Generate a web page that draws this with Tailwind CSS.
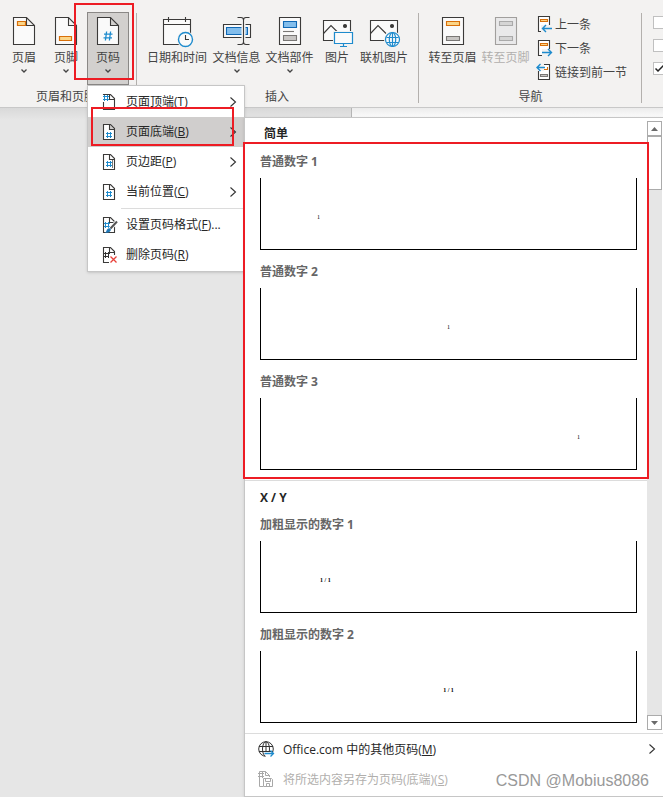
<!DOCTYPE html>
<html lang="zh-CN">
<head>
<meta charset="utf-8">
<title>页眉和页脚</title>
<script src="https://cdn.jsdelivr.net/npm/@tailwindcss/browser@4"></script>
</head>
<body class="relative min-h-screen overflow-x-hidden bg-[#e6e6e6] font-['Open_Sans','Noto_Sans_CJK_SC',sans-serif] text-xs text-[#444]">

<svg class="hidden" aria-hidden="true">
  <symbol id="page" viewBox="0 0 34 32"><path d="M6.500 1.500H19.500L27.500 9.500V28.500H6.500ZM19.500 1.500V9.500H27.500" fill="#fafafa" stroke="#3b3a39" stroke-width="1.100"/></symbol>
  <symbol id="photo" viewBox="0 0 34 32"><g fill="#fafafa" stroke="#3b3a39" stroke-width="1.100"><path d="M3.500 4.500H30.500V24.500H3.500Z"/><path d="M3.500 17.500L11 9.500L19 17.500" fill="none"/><circle cx="25" cy="10" r="1.500" fill="#3b3a39"/></g></symbol>
  <symbol id="small" viewBox="0 0 18 18"><path d="M1.500 1.500H8.500L12.500 5.500V16.500H1.500ZM7.500 1.500V6.500H12.500" fill="#fff" stroke="#3b3a39" stroke-width="1.100"/></symbol>
  <symbol id="hash" viewBox="0 0 10 10"><path d="M3.600 0.500L2.400 9.500M7.600 0.500L6.400 9.500M1 3.200H9.500M0.500 6.800H9" fill="none" stroke="currentColor" stroke-width="1.300"/></symbol>
  <symbol id="tinyhash" viewBox="0 0 6 6"><path d="M1.500 0V6M4.500 0V6M0 1.500H6M0 4.500H6" fill="none" stroke="currentColor"/></symbol>
  <symbol id="down" viewBox="0 0 8 6"><path d="M1.500 1.500L4 4L6.500 1.500" fill="none" stroke="#444" stroke-width="1.300"/></symbol>
  <symbol id="right" viewBox="0 0 8 12"><path d="M1.500 1.500L6.500 6L1.500 10.500" fill="none" stroke="#333" stroke-width="1.100"/></symbol>
</svg>

<header class="flex h-[108px] overflow-hidden whitespace-nowrap border-b border-[#c8c8c8] bg-[#f3f2f1] pt-3">
  <section class="flex shrink-0 flex-col px-[3px]" aria-label="页眉和页脚">
    <div class="flex">
      <button class="flex h-[72px] w-[42px] flex-col items-center pt-1">
        <svg class="h-8 w-[34px] shrink-0" viewBox="0 0 34 32"><use href="#page"/><path d="M10.500 5.500H18.500V9.500H10.500Z" fill="#fbd588" stroke="#d86f0a" stroke-width="1.200"/></svg>
        <span class="h-5 leading-5">页眉</span><svg class="h-1.5 w-2"><use href="#down"/></svg>
      </button>
      <button class="flex h-[72px] w-[42px] flex-col items-center pt-1">
        <svg class="h-8 w-[34px] shrink-0" viewBox="0 0 34 32"><use href="#page"/><path d="M10.500 20.500H22.500V24.500H10.500Z" fill="#fbd588" stroke="#d86f0a" stroke-width="1.200"/></svg>
        <span class="h-5 leading-5">页脚</span><svg class="h-1.5 w-2"><use href="#down"/></svg>
      </button>
      <button class="flex h-[73px] w-[42px] flex-col items-center border border-[#8a8886] bg-[#d2d0ce] pt-[3px]" aria-expanded="true">
        <svg class="h-8 w-[34px] shrink-0 text-[#1e8bcd]" viewBox="0 0 34 32"><use href="#page"/><use href="#hash" x="12" y="15" width="10" height="10"/></svg>
        <span class="h-5 leading-5">页码</span><svg class="h-1.5 w-2"><use href="#down"/></svg>
      </button>
    </div>
    <div class="-mt-px h-6 text-center leading-[26px]">页眉和页脚</div>
  </section>
  <div class="ml-1 mt-px h-[90px] w-px shrink-0 bg-[#b3b0ad]"></div>

  <section class="flex shrink-0 flex-col pl-[7px] pr-2" aria-label="插入">
    <div class="flex">
      <button class="flex h-[72px] w-[66px] flex-col items-center pt-1">
        <svg class="h-8 w-[34px] shrink-0" viewBox="0 0 34 32" fill="#fafafa" stroke="#3b3a39" stroke-width="1.100"><path d="M3.500 3.500H30.500V28.500H3.500ZM3.500 8.500H30.500M8.500 1V6M25.500 1V6"/><circle cx="25.500" cy="23.500" r="8.500" fill="#f3f2f1" stroke="none"/><circle cx="25.500" cy="23.500" r="7" stroke="#1e8bcd" stroke-width="1.400"/><path d="M25.500 19V23.500H29" fill="none"/></svg>
        <span class="h-5 leading-5">日期和时间</span>
      </button>
      <button class="flex h-[72px] w-[53px] flex-col items-center pt-1">
        <svg class="h-8 w-[34px] shrink-0" viewBox="0 0 34 32" fill="none" stroke="#3b3a39" stroke-width="1.100"><path d="M3.500 8.500H30.500V21.500H3.500Z" fill="#fafafa"/><path d="M6.500 11.500H27.500V18.500H6.500Z" fill="#83beec" stroke="#1068b4"/><path d="M23.500 3V27" stroke="#f3f2f1" stroke-width="4"/><path d="M17.500 1.500H21Q23.500 1.500 23.500 4V26Q23.500 28.500 21 28.500H17.500M29.500 1.500H26Q23.500 1.500 23.500 4M29.500 28.500H26Q23.500 28.500 23.500 26"/></svg>
        <span class="h-5 leading-5">文档信息</span><svg class="h-1.5 w-2"><use href="#down"/></svg>
      </button>
      <button class="flex h-[72px] w-[53px] flex-col items-center pt-1">
        <svg class="h-8 w-[34px] shrink-0" viewBox="0 0 34 32" stroke="#3b3a39" stroke-width="1.100"><path d="M6.500 1.500H27.500V28.500H6.500Z" fill="#fafafa"/><path d="M10.500 5.500H23.500V11.500H10.500Z" fill="#83beec" stroke="#1068b4"/><path d="M10 15.500H21" stroke="#797775"/><path d="M10.500 19.500H23.500V24.500H10.500Z" fill="#c8c6c4" stroke="#797775"/></svg>
        <span class="h-5 leading-5">文档部件</span><svg class="h-1.5 w-2"><use href="#down"/></svg>
      </button>
      <button class="flex h-[72px] w-[42px] flex-col items-center pt-1">
        <svg class="h-8 w-[34px] shrink-0" viewBox="0 0 34 32"><use href="#photo"/><path d="M13 15H34V29H13Z" fill="#f3f2f1"/><path d="M14.500 16.500H32.500V27.500H14.500ZM23.500 27.500V30.500M20 30.500H27" fill="#fafafa" stroke="#1e8bcd" stroke-width="1.200"/></svg>
        <span class="h-5 leading-5">图片</span>
      </button>
      <button class="flex h-[72px] w-[52px] flex-col items-center pt-1">
        <svg class="h-8 w-[34px] shrink-0" viewBox="0 0 34 32"><use href="#photo"/><circle cx="25.500" cy="23.500" r="8.500" fill="#f3f2f1"/><g fill="none" stroke="#1e8bcd" stroke-width="1.200"><circle cx="25.500" cy="23.500" r="7" fill="#fafafa"/><ellipse cx="25.500" cy="23.500" rx="3.200" ry="7"/><path d="M19.500 21.500H31.500M19.500 26.500H31.500M25.500 16.500V30.500"/></g></svg>
        <span class="h-5 leading-5">联机图片</span>
      </button>
    </div>
    <div class="h-6 text-center leading-[26px]">插入</div>
  </section>
  <div class="mt-px h-[90px] w-px shrink-0 bg-[#b3b0ad]"></div>

  <section class="flex shrink-0 flex-col px-[7px]" aria-label="导航">
    <div class="flex">
      <button class="flex h-[72px] w-[53px] flex-col items-center pt-1">
        <svg class="h-8 w-[34px] shrink-0" viewBox="0 0 34 32" stroke-width="1.100"><path d="M6.500 1.500H27.500V28.500H6.500Z" fill="#fafafa" stroke="#3b3a39"/><path d="M10.500 5.500H23.500V9.500H10.500Z" fill="#fbd588" stroke="#d86f0a"/><path d="M10.500 20.500H23.500V24.500H10.500Z" fill="#c8c6c4" stroke="#797775"/></svg>
        <span class="h-5 leading-5">转至页眉</span>
      </button>
      <button class="flex h-[72px] w-[53px] flex-col items-center pt-1 text-[#b1afad]" disabled>
        <svg class="h-8 w-[34px] shrink-0" viewBox="0 0 34 32" stroke-width="1.100" stroke="#a19f9d"><path d="M6.500 1.500H27.500V28.500H6.500Z" fill="#e9e9ea"/><path d="M10.500 5.500H23.500V9.500H10.500ZM10.500 20.500H23.500V24.500H10.500Z" fill="#d5d5d5" stroke="#aaa"/></svg>
        <span class="h-5 leading-5">转至页脚</span>
      </button>
      <div class="ml-1 flex flex-col">
        <button class="flex h-6 items-center gap-px"><svg class="size-[18px]" viewBox="0 0 18 18" fill="none" stroke-width="1.100"><path d="M2.500 1.500H13.500V16.500H2.500Z" fill="#fff" stroke="#3b3a39"/><path d="M4.500 4.500H11.500V6.500H4.500Z" fill="#fbd588" stroke="#d86f0a"/><path d="M5 10H15V17H5Z" fill="#f3f2f1"/><path d="M16 13.500H6.500M10 10L6.500 13.500L10 17" stroke="#1e8bcd" stroke-width="1.400"/></svg><span class="pt-0.5">上一条</span></button>
        <button class="flex h-6 items-center gap-px"><svg class="size-[18px]" viewBox="0 0 18 18" fill="none" stroke-width="1.100"><path d="M2.500 1.500H13.500V16.500H2.500Z" fill="#fff" stroke="#3b3a39"/><path d="M4.500 4.500H11.500V6.500H4.500Z" fill="#fbd588" stroke="#d86f0a"/><path d="M6 10H15V17H6Z" fill="#f3f2f1"/><path d="M6 13.500H15.500M12 10L15.500 13.500L12 17" stroke="#1e8bcd" stroke-width="1.400"/></svg><span class="pt-0.5">下一条</span></button>
        <button class="flex h-6 items-center gap-px"><svg class="size-[18px]" viewBox="0 0 18 18" fill="none" stroke-width="1.100"><path d="M2.500 1.500H13.500V16.500H2.500Z" fill="#fff" stroke="#3b3a39"/><path d="M8 6.500H11.500V4" stroke="#d86f0a"/><path d="M4.500 11.500H11.500V13.500H4.500Z" fill="#c8c6c4" stroke="#797775"/><path d="M0 1H8V8H0Z" fill="#f3f2f1"/><path d="M9 4.500H1M4.500 1L1 4.500L4.500 8" stroke="#1e8bcd" stroke-width="1.400"/></svg><span class="pt-0.5">链接到前一节</span></button>
      </div>
    </div>
    <div class="h-6 pl-2 text-center leading-[26px]">导航</div>
  </section>
  <div class="ml-[7px] mt-px h-[90px] w-px shrink-0 bg-[#b3b0ad]"></div>

  <section class="ml-[11px] flex shrink-0 flex-col gap-2.5 pt-1" aria-label="选项">
    <input type="checkbox" aria-label="首页不同" class="block size-[13px] appearance-none border border-[#c0c0c0] bg-white">
    <input type="checkbox" aria-label="奇偶页不同" class="block size-[13px] appearance-none border border-[#c0c0c0] bg-white">
    <div class="relative">
      <input type="checkbox" checked aria-label="显示文档文字" class="block size-[13px] appearance-none border border-[#c0c0c0] bg-white">
      <svg class="pointer-events-none absolute inset-0 size-[13px]" viewBox="0 0 13 13"><path d="M2.500 6.500L5 9L10.500 3.500" fill="none" stroke="#222" stroke-width="1.500"/></svg>
    </div>
  </section>
</header>

<main class="flex h-3">
  <div class="w-[351px] bg-linear-to-b from-[#d9d9d9] to-[#e6e6e6]"></div>
  <div class="flex-1 border-l border-[#b5b5b5] bg-linear-to-b from-[#ececec] to-white"></div>
</main>

<nav class="absolute left-[87px] top-[85px] w-[158px] whitespace-nowrap border border-[#c6c6c6] bg-white pb-px pt-px text-[#262626] shadow-sm" aria-label="页码">
  <button class="flex h-[30px] w-full items-center pl-3.5 pr-[7px]"><svg class="mr-1.5 size-[18px] text-[#1e8bcd]" viewBox="0 0 18 18"><use href="#small"/><path d="M0 2H7V9H0Z" fill="#fff"/><use href="#tinyhash" x="1" y="2" width="6" height="6"/></svg><span>页面顶端(<u>T</u>)</span><svg class="ml-auto h-3 w-2"><use href="#right"/></svg></button>
  <button class="flex h-[30px] w-full items-center bg-[#d0cecd] pl-3.5 pr-[7px]"><svg class="mr-1.5 size-[18px] text-[#1e8bcd]" viewBox="0 0 18 18"><use href="#small"/><use href="#tinyhash" x="4" y="9" width="6" height="6"/></svg><span>页面底端(<u>B</u>)</span><svg class="ml-auto h-3 w-2"><use href="#right"/></svg></button>
  <button class="flex h-[30px] w-full items-center pl-3.5 pr-[7px]"><svg class="mr-1.5 size-[18px] text-[#1e8bcd]" viewBox="0 0 18 18"><use href="#small"/><use href="#tinyhash" x="4" y="8" width="6" height="6"/><path d="M10.500 7V15" stroke="#777"/></svg><span>页边距(<u>P</u>)</span><svg class="ml-auto h-3 w-2"><use href="#right"/></svg></button>
  <button class="flex h-[30px] w-full items-center pl-3.5 pr-[7px]"><svg class="mr-1.5 size-[18px] text-[#1e8bcd]" viewBox="0 0 18 18"><use href="#small"/><use href="#tinyhash" x="4" y="8" width="6" height="6"/></svg><span>当前位置(<u>C</u>)</span><svg class="ml-auto h-3 w-2"><use href="#right"/></svg></button>
  <hr class="mb-px ml-[33px] mt-px border-[#dcdcdc]">
  <button class="flex h-[30px] w-full items-center pl-3.5"><svg class="mr-1.5 size-[18px] text-[#1e8bcd]" viewBox="0 0 18 18"><use href="#small"/><use href="#tinyhash" x="2" y="6" width="6" height="6"/><path d="M15 5.500L8 13" stroke="#fff" stroke-width="4"/><path d="M15 5.500L8.500 12.500" stroke="#555" stroke-width="2"/><path d="M2.500 16.500Q4.500 16 5 13.500Q6.500 11.500 8.500 12.500Q9.500 14 8 15.500Q6 17.500 2.500 16.500Z" fill="#1e78b8"/></svg><span>设置页码格式(<u>F</u>)...</span></button>
  <button class="flex h-[30px] w-full items-center pl-3.5"><svg class="mr-1.5 size-[18px] text-[#333]" viewBox="0 0 18 18"><use href="#small"/><use href="#tinyhash" x="2" y="6" width="6" height="6"/><path d="M7 9H15V18H7Z" fill="#fff"/><path d="M8.500 10.500L14.500 16.500M14.500 10.500L8.500 16.500" stroke="#e8413a" stroke-width="1.300"/></svg><span>删除页码(<u>R</u>)</span></button>
</nav>
<div class="pointer-events-none absolute left-[91px] top-[107px] h-[39px] w-[143px] border-2 border-[#ed1c24]"></div>
<div class="pointer-events-none absolute left-[74px] top-[3px] h-[77px] w-[60px] border-2 border-[#ed1c24]"></div>

<aside class="absolute left-[244px] right-0 top-[117px] border-y border-l border-[#c6c6c6] bg-white shadow-sm" aria-label="页面底端">
  <div class="flex">
    <div class="min-w-0 flex-1">
      <section class="border-b border-[#dcdcdc] pb-2.5 pl-[15px] pr-2.5 pt-[5px]">
        <h2 class="mb-2 h-5 pl-1 font-bold leading-[22px] text-[#262626]">简单</h2>
        <div class="flex flex-col gap-[11px]">
          <button class="block w-full text-left"><span class="mb-[7px] block h-5 font-bold leading-[22px] text-[#666]">普通数字 1</span><span class="block h-[72px] border-x border-b border-black px-14 pt-9 font-['Liberation_Serif',serif] text-[6px] leading-[6px] text-black">1</span></button>
          <button class="block w-full text-left"><span class="mb-[7px] block h-5 font-bold leading-[22px] text-[#666]">普通数字 2</span><span class="block h-[72px] border-x border-b border-black px-14 pt-9 text-center font-['Liberation_Serif',serif] text-[6px] leading-[6px] text-black">1</span></button>
          <button class="block w-full text-left"><span class="mb-[7px] block h-5 font-bold leading-[22px] text-[#666]">普通数字 3</span><span class="block h-[72px] border-x border-b border-black px-14 pt-9 text-right font-['Liberation_Serif',serif] text-[6px] leading-[6px] text-black">1</span></button>
        </div>
      </section>
      <section class="pb-2.5 pl-[15px] pr-2.5 pt-1.5">
        <h2 class="mb-[7px] h-5 font-bold leading-[22px] text-[#262626]">X / Y</h2>
        <div class="flex flex-col gap-[11px]">
          <button class="block w-full text-left"><span class="mb-[7px] block h-5 font-bold leading-[22px] text-[#666]">加粗显示的数字 1</span><span class="block h-[72px] border-x border-b border-black px-[59px] pt-9 font-['Liberation_Serif',serif] text-[6px] font-bold leading-[6px] text-black">1 / 1</span></button>
          <button class="block w-full text-left"><span class="mb-[7px] block h-5 font-bold leading-[22px] text-[#666]">加粗显示的数字 2</span><span class="block h-[72px] border-x border-b border-black px-[59px] pt-9 text-center font-['Liberation_Serif',serif] text-[6px] font-bold leading-[6px] text-black">1 / 1</span></button>
        </div>
      </section>
    </div>
    <div class="mb-[3px] mr-px mt-[3px] flex w-[15px] flex-col bg-[#e6e6e6]">
      <button class="flex h-[15px] items-center justify-center border border-[#ababab] bg-white" aria-label="向上滚动"><svg class="h-1 w-[7px]" viewBox="0 0 7 4"><path d="M0 4L3.500 0L7 4Z" fill="#6a6a6a"/></svg></button>
      <div class="h-[54px] border border-[#ababab] bg-white"></div>
      <button class="mt-auto flex h-[15px] items-center justify-center border border-[#ababab] bg-white" aria-label="向下滚动"><svg class="h-1 w-[7px]" viewBox="0 0 7 4"><path d="M0 0L3.500 4L7 0Z" fill="#6a6a6a"/></svg></button>
    </div>
  </div>
  <div class="border-t border-[#dcdcdc] pb-0.5">
    <button class="flex h-[30px] w-full items-center pl-3 pr-[7px] text-[#262626]"><svg class="mr-2 size-[18px]" viewBox="0 0 18 18" fill="none" stroke="#333"><circle cx="9" cy="9" r="7.300"/><ellipse cx="9" cy="9" rx="3.500" ry="7.300"/><path d="M2 6.500H16M2 11.500H16M9 2V16"/><path d="M7 12H18V18H9Z" fill="#fff" stroke="none"/><path d="M7.500 13.500H16.500M13.500 10.500L16.500 13.500L13.500 16.500" stroke="#1e8bcd" stroke-width="1.300"/></svg><span class="pt-0.5">Office.com 中的其他页码(<u>M</u>)</span><svg class="ml-auto h-3 w-2"><use href="#right"/></svg></button>
    <button class="flex h-[30px] w-full items-center pl-3 text-[#b1afad]" disabled><svg class="mr-2 size-[18px]" viewBox="0 0 18 18" fill="none" stroke="#a8a8a8"><path d="M6 16.500H2.500V1.500H8.500L12.500 5.500V7M8.500 1.500V5.500H12.500M1 3.500H7M1 6.500H7M5.500 1V8"/><path d="M6.500 8.500H14.500L15.500 9.500V16.500H6.500ZM8.500 8.500V11.500H13.500V8.500M9.500 16V13.500H12.500V16"/></svg><span class="pt-0.5">将所选内容另存为页码(底端)(<u>S</u>)</span></button>
  </div>
  <div class="pointer-events-none absolute -left-0.5 right-3.5 top-6 h-[337px] border-2 border-[#ed1c24]"></div>
</aside>
<p class="pointer-events-none absolute right-3.5 top-[771px] font-['Liberation_Sans',sans-serif] text-base leading-5 text-[#999]">CSDN @Mobius8086</p>
</body>
</html>
